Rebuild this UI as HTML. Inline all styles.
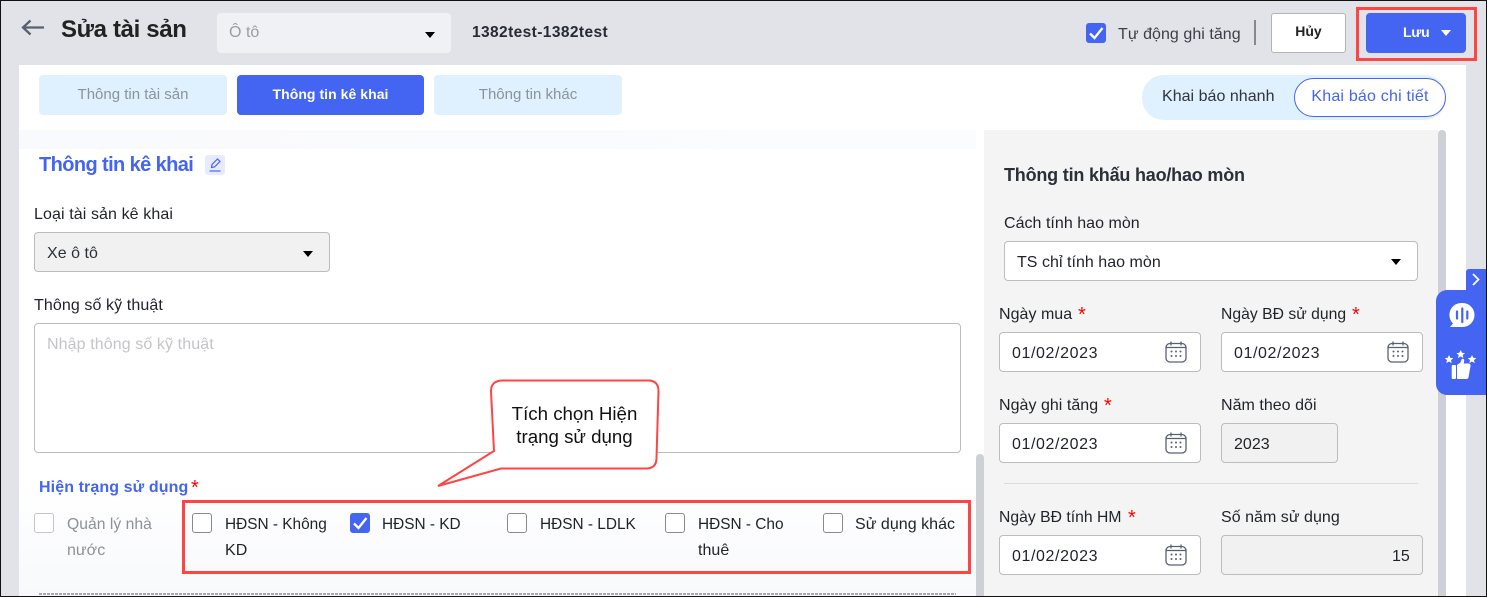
<!DOCTYPE html>
<html lang="vi"><head><meta charset="utf-8"><title>Sửa tài sản</title>
<style>
html,body{margin:0;padding:0}
body{width:1487px;height:597px;overflow:hidden;position:relative;background:#e1e3e9;font-family:"Liberation Sans",sans-serif;font-size:16px;color:#1f2229}
.a,.t{position:absolute;box-sizing:border-box}
.t{white-space:nowrap;line-height:24px;letter-spacing:.03px}
.d{letter-spacing:.6px}
.h{font-size:15.400px;letter-spacing:0}
.box{border:1px solid #bcbcbc;border-radius:4px;background:#fff}
.dis{background:#f1f1f1}
.cb{width:20px;height:20px;border:1px solid #8a8a8a;border-radius:3px;background:#fff;position:absolute;box-sizing:border-box}
.chk{background:#4464f2;border-color:#4464f2}
.req{color:#f00;font-size:20px;line-height:20px}
.tab{height:40px;top:75px;border-radius:4px;background:#dff0fe;color:#8d9299;text-align:center;line-height:40px;font-size:15px}
.car{position:absolute;width:0;height:0;border-left:5px solid transparent;border-right:5px solid transparent;border-top:6px solid #000}
svg{position:absolute;overflow:visible}
</style></head><body>

<!-- main panels -->
<div class="a" style="left:19px;top:65px;width:1447px;height:532px;background:#fff"></div>
<div class="a" style="left:19px;top:130px;width:957px;height:19px;background:linear-gradient(90deg,#f9fafd,#fbfcfe)"></div>
<div class="a" style="left:19px;top:480px;width:957px;height:117px;background:linear-gradient(#fff,#f8f9fc)"></div>
<div class="a" style="left:984px;top:130px;width:454px;height:467px;background:#f4f4f4"></div>
<div class="a" style="left:1438px;top:130px;width:8px;height:467px;background:#cdd1d5;border-radius:4px 4px 0 0"></div>
<div class="a" style="left:976px;top:454px;width:8px;height:143px;background:#cdd1d5;border-radius:4px 4px 0 0"></div>

<!-- header -->
<svg style="left:21px;top:18px" width="24" height="20" viewBox="0 0 24 20" fill="none" stroke="#596072" stroke-width="2.300"><path d="M23 9.500H2M9.500 2.500L2 9.500L9.500 16.500"/></svg>
<div class="t" style="left:61px;top:17px;font-size:24px;font-weight:bold;line-height:26px;letter-spacing:-.35px;color:#222">Sửa tài sản</div>
<div class="a" style="left:217px;top:13px;width:234px;height:40px;background:#f0f1f4;border-radius:4px"></div>
<div class="t" style="left:229px;top:21px;color:#9a9da3">Ô tô</div>
<div class="car" style="left:425px;top:32px"></div>
<div class="t" style="left:472px;top:21px;font-size:15.500px;font-weight:bold;letter-spacing:.4px;color:#262a33">1382test-1382test</div>

<div class="cb chk" style="left:1086px;top:23px"></div>
<svg style="left:1086px;top:23px" width="20" height="20" viewBox="0 0 20 20" fill="none" stroke="#fff" stroke-width="2.300"><path d="M4 10.500L8.500 15L16.500 5"/></svg>
<div class="t" style="left:1118px;top:23px;letter-spacing:.05px;color:#3b3f47">Tự động ghi tăng</div>
<div class="a" style="left:1254px;top:20px;width:2px;height:25px;background:#86888d"></div>
<div class="a" style="left:1271px;top:13px;width:75px;height:40px;background:#fff;border:1px solid #b4b4b4;border-radius:3px;text-align:center;font-size:14px;font-weight:bold;line-height:35px;color:#222">Hủy</div>
<div class="a" style="left:1366px;top:13px;width:100px;height:40px;background:#4464f2;border-radius:4px"></div>
<div class="t" style="left:1403px;top:20px;font-size:14px;font-weight:bold;color:#fff;letter-spacing:-.3px">Lưu</div>
<div class="car" style="left:1441px;top:30px;border-top-color:#fff"></div>
<div class="a" style="left:1356px;top:7px;width:121px;height:54px;border:3px solid #ff4444"></div>

<!-- tabs -->
<div class="a tab" style="left:39px;width:188px">Thông tin tài sản</div>
<div class="a tab" style="left:237px;width:187px;background:#4464f2;color:#fff;font-weight:bold;font-size:14px;letter-spacing:.05px;line-height:38px">Thông tin kê khai</div>
<div class="a tab" style="left:434px;width:188px">Thông tin khác</div>

<div class="a" style="left:1142px;top:75px;width:304px;height:45px;background:#dff0fe;border-radius:22px"></div>
<div class="t" style="left:1162px;top:85px;color:#30343c">Khai báo nhanh</div>
<div class="a" style="left:1294px;top:78px;width:152px;height:39px;background:#fff;border:1px solid #4464f2;border-radius:20px;text-align:center;line-height:35px;color:#4464f2;letter-spacing:.2px">Khai báo chi tiết</div>

<!-- left form -->
<div class="t" style="left:39px;top:154px;font-size:20px;font-weight:bold;line-height:23px;letter-spacing:-.6px;color:#4464f2">Thông tin kê khai</div>
<div class="a" style="left:205px;top:155px;width:20px;height:20px;background:#e8ebfd;border-radius:3px"></div>
<svg style="left:205px;top:155px" width="20" height="20" viewBox="0 0 20 20" fill="none" stroke="#4464f2" stroke-width="1.200"><path d="M6.500 12.500L7 9.500L12.500 4L15 6.500L9.500 12L6.500 12.500Z"/><path d="M4.500 16H15.500"/></svg>

<div class="t" style="left:34px;top:203px;letter-spacing:.1px">Loại tài sản kê khai</div>
<div class="a box dis" style="left:34px;top:232px;width:296px;height:40px"></div>
<div class="t" style="left:47px;top:242px;color:#2c3038">Xe ô tô</div>
<div class="car" style="left:303px;top:251px"></div>
<div class="t" style="left:34px;top:294px;letter-spacing:.1px">Thông số kỹ thuật</div>
<div class="a box" style="left:34px;top:323px;width:927px;height:130px"></div>
<div class="t" style="left:47px;top:333px;letter-spacing:.1px;color:#c4c5c8">Nhập thông số kỹ thuật</div>

<div class="t" style="left:39px;top:476px;font-size:16px;font-weight:bold;letter-spacing:.1px;color:#4464f2">Hiện trạng sử dụng</div>
<div class="t req" style="left:191px;top:478px">*</div>

<div class="cb" style="left:34px;top:513px;border-color:#c6c6c6"></div>
<div class="t" style="left:67px;top:513px;color:#8d9096;font-size:15.700px">Quản lý nhà</div>
<div class="t" style="left:67px;top:539px;color:#8d9096">nước</div>

<div class="cb" style="left:192px;top:513px"></div>
<div class="t h" style="left:225px;top:513px">HĐSN - Không</div>
<div class="t" style="left:225px;top:539px">KD</div>
<div class="cb chk" style="left:350px;top:513px"></div>
<svg style="left:350px;top:513px" width="20" height="20" viewBox="0 0 20 20" fill="none" stroke="#fff" stroke-width="2.300"><path d="M4 10.500L8.500 15L16.500 5"/></svg>
<div class="t h" style="left:382px;top:513px">HĐSN - KD</div>
<div class="cb" style="left:507px;top:513px"></div>
<div class="t h" style="left:540px;top:513px">HĐSN - LDLK</div>
<div class="cb" style="left:665px;top:513px"></div>
<div class="t h" style="left:698px;top:513px">HĐSN - Cho</div>
<div class="t" style="left:698px;top:539px">thuê</div>
<div class="cb" style="left:823px;top:513px"></div>
<div class="t" style="left:855px;top:513px">Sử dụng khác</div>
<div class="a" style="left:182px;top:500px;width:789px;height:74px;border:3px solid #ff4444"></div>
<div class="a" style="left:39px;top:593px;width:917px;height:2px;background:repeating-linear-gradient(90deg,#aaa 0 3px,transparent 3px 4px)"></div>

<!-- callout -->
<svg style="left:0;top:0" width="1487" height="597" viewBox="0 0 1487 597"><path d="M503 380.500H648Q658.500 380.500 658.500 391L656.500 458Q656.500 468.500 646 468.500H501L438 486L494 451L491 391Q491 380.500 503 380.500Z" fill="#fff" stroke="#ff4444" stroke-width="2"/></svg>
<div class="t" style="left:491px;top:402px;width:167px;text-align:center;font-size:18.700px;line-height:23px;color:#111;letter-spacing:0">Tích chọn Hiện<br>trạng sử dụng</div>

<!-- right form -->
<div class="t" style="left:1004px;top:164px;font-size:18px;font-weight:bold;line-height:22px;letter-spacing:-.2px;color:#2b2f38">Thông tin khấu hao/hao mòn</div>
<div class="t" style="left:1004px;top:212px">Cách tính hao mòn</div>
<div class="a box" style="left:1004px;top:241px;width:414px;height:40px"></div>
<div class="t" style="left:1017px;top:251px">TS chỉ tính hao mòn</div>
<div class="car" style="left:1391px;top:259px"></div>

<div class="t" style="left:999px;top:303px">Ngày mua</div>
<div class="t req" style="left:1078px;top:305px">*</div>
<div class="t" style="left:1221px;top:303px;font-size:15.700px">Ngày BĐ sử dụng</div>
<div class="t req" style="left:1352px;top:305px">*</div>
<div class="a box" style="left:999px;top:332px;width:202px;height:40px"></div>
<div class="t d" style="left:1012px;top:342px">01/02/2023</div>
<div class="a box" style="left:1221px;top:332px;width:202px;height:40px"></div>
<div class="t d" style="left:1234px;top:342px">01/02/2023</div>

<div class="t" style="left:999px;top:394px">Ngày ghi tăng</div>
<div class="t req" style="left:1104px;top:396px">*</div>
<div class="t" style="left:1221px;top:394px">Năm theo dõi</div>
<div class="a box" style="left:999px;top:423px;width:202px;height:40px"></div>
<div class="t d" style="left:1012px;top:433px">01/02/2023</div>
<div class="a box dis" style="left:1221px;top:423px;width:117px;height:40px"></div>
<div class="t" style="left:1234px;top:433px">2023</div>

<div class="a" style="left:1004px;top:483px;width:414px;height:1px;background:#dcdcdc"></div>

<div class="t" style="left:999px;top:506px;font-size:15.700px">Ngày BĐ tính HM</div>
<div class="t req" style="left:1128px;top:508px">*</div>
<div class="t" style="left:1221px;top:506px">Số năm sử dụng</div>
<div class="a box" style="left:999px;top:535px;width:202px;height:40px"></div>
<div class="t d" style="left:1012px;top:545px">01/02/2023</div>
<div class="a box dis" style="left:1221px;top:535px;width:202px;height:40px"></div>
<div class="t" style="left:1392px;top:545px">15</div>

<!-- calendar icons -->
<svg width="0" height="0"><defs><g id="cal" fill="none" stroke="#596072" stroke-width="1.300"><rect x="1" y="2.500" width="20" height="18.500" rx="4"/><path d="M6 0.500V4.500M16 0.500V4.500M1 6.500H21"/><g fill="#596072" stroke="none"><circle cx="6.500" cy="10.500" r="1"/><circle cx="11" cy="10.500" r="1"/><circle cx="15.500" cy="10.500" r="1"/><circle cx="6.500" cy="15" r="1"/><circle cx="11" cy="15" r="1"/><circle cx="15.500" cy="15" r="1"/></g></g></defs></svg>
<svg style="left:1165px;top:341px" width="22" height="22"><use href="#cal"/></svg>
<svg style="left:1387px;top:341px" width="22" height="22"><use href="#cal"/></svg>
<svg style="left:1165px;top:432px" width="22" height="22"><use href="#cal"/></svg>
<svg style="left:1165px;top:544px" width="22" height="22"><use href="#cal"/></svg>

<!-- side widget -->
<div class="a" style="left:1466px;top:269px;width:21px;height:21px;background:#4464f2;border-radius:3px 0 0 0"></div>
<svg style="left:1466px;top:269px" width="21" height="21" fill="none" stroke="#fff" stroke-width="1.800"><path d="M7 5L12.500 10.500L7 16"/></svg>
<div class="a" style="left:1436px;top:290px;width:51px;height:105px;background:#4464f2;border-radius:11px 0 0 11px"></div>
<svg style="left:1436px;top:290px" width="51" height="105" viewBox="0 0 51 105">
<path d="M26.500 13a12 12 0 1 1 0 24H14l3-3.500A12 12 0 0 1 26.500 13Z" fill="#fff"/>
<g stroke="#4464f2" stroke-width="2.200" stroke-linecap="round"><path d="M21 21.500V28.500M26.300 18.500V32M31.300 21.500V28.500"/></g>
<g fill="#fff"><path d="M13 65l1.300 2.800 3 .3-2.300 2 .7 3-2.700-1.600-2.700 1.600.7-3-2.300-2 3-.3Z"/><path d="M24.700 60l1.300 2.800 3 .3-2.300 2 .7 3-2.700-1.600-2.700 1.600.7-3-2.300-2 3-.3Z"/><path d="M36 65l1.300 2.800 3 .3-2.300 2 .7 3-2.700-1.600-2.700 1.600.7-3-2.300-2 3-.3Z"/>
<rect x="15.700" y="75" width="4.300" height="14" rx="1"/><path d="M21 75l3.500-2.500 1-3c.6-1.300 2.700-.9 2.700 1l-.4 3h4.700c1.400 0 2.300 1.200 2 2.500L32.600 87c-.3 1.200-1.100 2-2.400 2H21Z"/></g>
</svg>

<!-- image border -->
<div class="a" style="left:0;top:0;width:1487px;height:597px;border:1px solid #111"></div>
</body></html>
